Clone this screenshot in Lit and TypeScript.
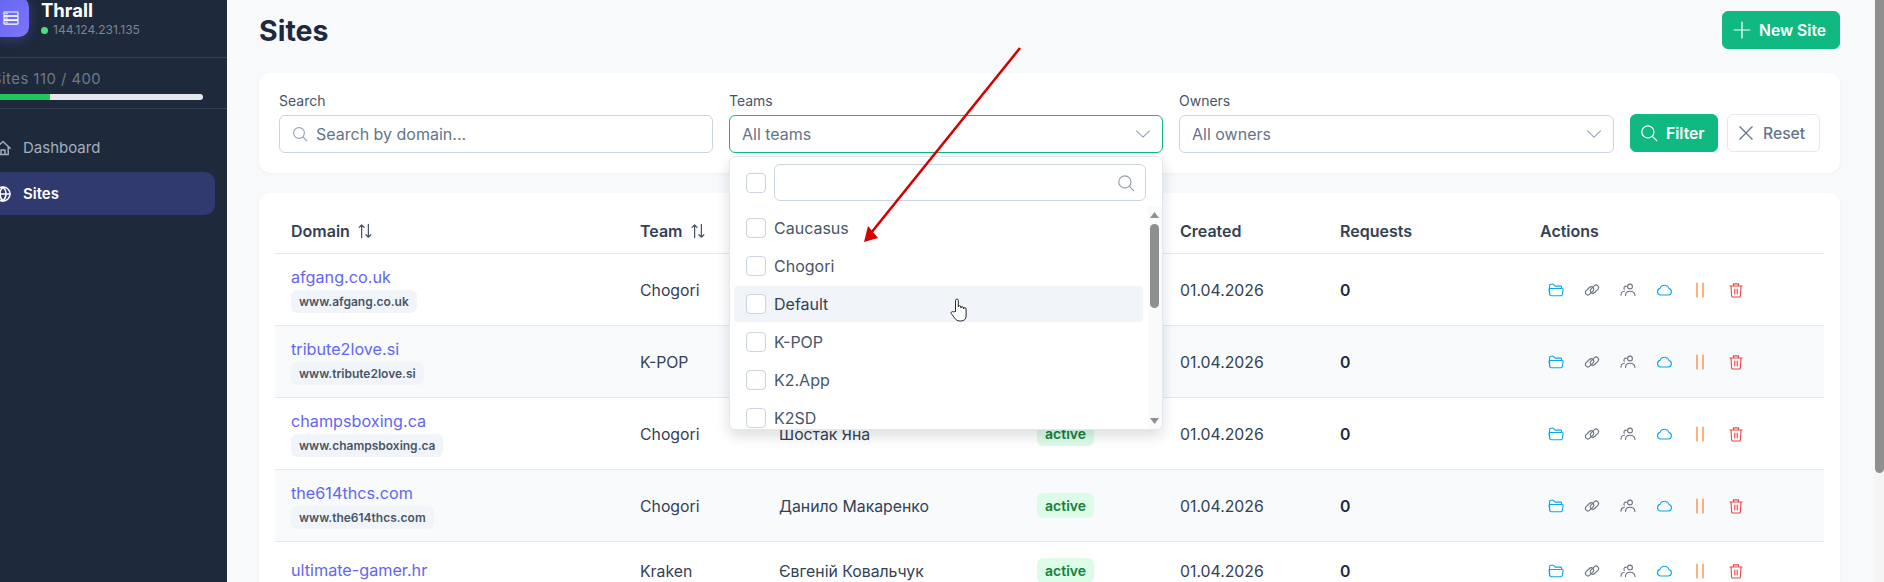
import { LitElement, html, css, svg } from "lit";
import { customElement } from "lit/decorators.js";

const ico = (body: unknown, cls = "") => html`<svg class="ico ${cls}" viewBox="0 0 16 16" fill="none" stroke="currentColor" stroke-width="1.1" stroke-linecap="round" stroke-linejoin="round">${body}</svg>`;

const searchI = svg`<circle cx="7" cy="7" r="5.4"/><path d="M11 11l3.8 3.8"/>`;
const chevron = svg`<path d="M1.5 4.8L8 11.2l6.500-6.400"/>`;
const folder = svg`<path d="M1.600 12.500V3.200a.9.9 0 0 1 .9-.9h3l1.700 1.800h5.500a.9.900 0 0 1 .9.9v1.500"/><path d="M2 6.500h12.300a.8.8 0 0 1 .8.9l-.7 5a1.500 1.500 0 0 1-1.500 1.300H3.200a1.500 1.500 0 0 1-1.500-1.300L1 7.400a.8.8 0 0 1 1-.9z"/>`;
const clip = svg`<rect x="0.800" y="6.400" width="9.500" height="5" rx="2.500" transform="rotate(-45 5.500 8.900)"/><rect x="5.700" y="4.600" width="9.500" height="5" rx="2.500" transform="rotate(-45 10.500 7.100)"/>`;
const people = svg`<circle cx="10" cy="4.500" r="2.400"/><path d="M5.500 13.500c0-2.800 2-4.300 4.500-4.300s4.800 1.500 5 4.300"/><path d="M6.500 4.200a2 2 0 0 0-2.200 3.100"/><path d="M1 13.200c0-2.300 1.300-3.600 3.400-3.900"/>`;
const cloud = svg`<path d="M4.200 13h7.800a3.300 3.300 0 0 0 .9-6.500A4.700 4.700 0 0 0 4 6.400 3.400 3.400 0 0 0 4.200 13z"/>`;
const pause = svg`<path d="M5 1v14M11 1v14"/>`;
const trash = svg`<path d="M2 4h12M5.500 4V1.900h5V4M3 4l.6 10a1 1 0 0 0 1 1h6.800a1 1 0 0 0 1-1L13 4M6.800 7v5M9.200 7v5"/>`;
const sort = svg`<path d="M5 14V2.500M2.800 4.800L5 2.500l2.200 2.300M11 2v11.500M8.800 11.300L11 13.500l2.200-2.200"/>`;
const house = svg`<path d="M.8 8.200L8 1.500l7.200 6.700M2.800 6.500V14.500h10.400V6.500M6 14.500V10h4v4.500"/>`;
const globe = svg`<circle cx="8" cy="8" r="7"/><path d="M1 8h14M8 1c-4 4-4 10 0 14M8 1c4 4 4 10 0 14"/>`;
const server = svg`<rect x="1" y="2" width="14" height="3.700" rx=".6"/><rect x="1" y="6.200" width="14" height="3.700" rx=".6"/><rect x="1" y="10.400" width="14" height="3.700" rx=".6"/><path d="M2.800 3.800h1.500M2.800 8h1.500M2.800 12.200h1.500"/>`;

const rows = [
  { d: "afgang.co.uk", w: "www.afgang.co.uk", t: "Chogori", o: "Шостак Яна" },
  { d: "tribute2love.si", w: "www.tribute2love.si", t: "K-POP", o: "Данило Макаренко" },
  { d: "champsboxing.ca", w: "www.champsboxing.ca", t: "Chogori", o: "Шостак Яна" },
  { d: "the614thcs.com", w: "www.the614thcs.com", t: "Chogori", o: "Данило Макаренко" },
  { d: "ultimate-gamer.hr", w: "", t: "Kraken", o: "Євгеній Ковальчук" },
];
const teams = ["Caucasus", "Chogori", "Default", "K-POP", "K2.App", "K2SD"];

@customElement("app-root")
export class AppRoot extends LitElement {
  static styles = css`
    :host { display: flex; position: relative; height: 100vh; overflow: hidden; background: #f8f9fb; font-family: Inter, "Noto Sans", sans-serif; color: #334155; }
    * { box-sizing: border-box; }
    .ico { width: 16px; height: 16px; display: block; flex: none; }

    aside { width: 227px; flex: none; background: #1e293b; overflow: hidden; }
    .side { width: 255px; margin-left: -28px; }
    .brand { height: 58px; padding-left: 20px; display: flex; gap: 12px; border-bottom: 1px solid #334155; }
    .logo { width: 37px; height: 40px; margin-top: -3px; padding-top: 2px; border-radius: 10px; background: linear-gradient(135deg, #6366f1, #7c75f8); box-shadow: 0 2px 12px rgba(99,102,241,.35); color: #fff; display: flex; align-items: center; justify-content: center; }
    .brand-text { display: flex; flex-direction: column; }
    .brand-name { font-size: 18.500px; line-height: 20px; font-weight: 700; color: #fff; }
    .brand-ip { display: flex; align-items: center; gap: 5px; font-size: 12px; line-height: 20px; color: #7b8694; }
    .dot { width: 7px; height: 7px; border-radius: 50%; background: #4ade80; }
    .usage { height: 51px; padding: 11px 24px 0 20px; border-bottom: 1px solid #334155; }
    .usage-text { font-size: 14.800px; line-height: 20px; letter-spacing: .5px; color: #6f7a88; }
    .bar { height: 6px; margin-top: 5px; border-radius: 3px; background: #e5e7eb; overflow: hidden; }
    .bar i { display: block; height: 100%; width: 27.5%; background: #22c55e; }
    nav { padding: 17px 12px 0; display: flex; flex-direction: column; gap: 3px; }
    nav a { height: 43px; padding: 0 11px; display: flex; align-items: center; gap: 12px; border-radius: 10px; font-size: 15px; color: #a3afbf; }
    nav a.on { background: #313a6e; color: #fff; font-weight: 600; }
    nav .ico { stroke-width: 1.500; }

    main { flex: 1; min-width: 0; padding: 11px 34px 0 32px; overflow: hidden; }
    .head { display: flex; justify-content: space-between; align-items: center; height: 38px; margin-bottom: 24px; }
    h1 { margin: 0; font-size: 28.500px; font-weight: 700; color: #1e293b; }
    .btn { height: 38px; display: inline-flex; align-items: center; gap: 8px; padding: 0 9px; border-radius: 6px; font-size: 15.700px; font-weight: 600; background: #10b981; color: #fff; border: 1px solid #10b981; }
    .btn .ico { width: 18px; height: 18px; }
    .btn.new { width: 118px; padding: 0 10px; }
    .btn.filter { width: 88px; }
    .btn.reset { width: 93px; background: #fff; color: #64748b; border-color: #e2e8f0; font-weight: 500; }
    .btns { display: flex; gap: 9px; margin-bottom: 1px; }
    .card { background: #fff; border-radius: 12px; box-shadow: 0 1px 3px rgba(15,23,42,.04); }
    .filters { height: 100px; margin-bottom: 20px; padding: 20px; display: flex; gap: 16px; align-items: flex-end; }
    .field { flex: none; width: 434px; position: relative; }
    .field.last { flex: 1; }
    label { display: block; font-size: 14px; line-height: 16px; margin-bottom: 6px; color: #475569; }
    .input { height: 38px; border: 1px solid #cbd5e1; border-radius: 6px; padding: 0 12px; display: flex; align-items: center; gap: 8px; font-size: 16px; color: #64748b; background: #fff; }
    .input .ico { color: #94a3b8; }
    .input span { flex: 1; }
    .input.sel { padding-right: 11px; }
    .input.open { border-color: #10b981; }

    .drop { position: absolute; left: 0; right: 0; top: 63px; height: 274px; z-index: 5; background: #fff; border: 1px solid #e2e8f0; border-radius: 6px; box-shadow: 0 6px 14px rgba(15,23,42,.14); overflow: hidden; }
    .drop-top { display: flex; align-items: center; gap: 8px; padding: 7px 16px 0 16px; }
    .cb { width: 20px; height: 20px; flex: none; border: 1px solid #cbd5e1; border-radius: 4px; background: #fff; }
    .drop-search { flex: 1; height: 37px; border: 1px solid #cbd5e1; border-radius: 6px; display: flex; justify-content: flex-end; align-items: center; padding-right: 10px; }
    .drop-search .ico { color: #94a3b8; width: 18px; height: 18px; }
    .list { margin: 9px 0 0 4px; width: 409px; display: flex; flex-direction: column; gap: 2px; }
    .item { height: 36px; flex: none; padding-left: 12px; display: flex; align-items: center; gap: 8px; font-size: 16px; color: #475569; border-radius: 4px; }
    .item.hover { background: #f1f5f9; color: #334155; }
    .sb { position: absolute; right: 0; top: 49px; bottom: 0; width: 14px; background: #fafafa; }
    .sb .thumb { position: absolute; left: 2px; top: 18px; width: 9px; height: 84px; border-radius: 5px; background: #8f8f8f; }
    .tri { position: absolute; left: 2px; width: 9px; height: 6px; background: #8f8f8f; }
    .tri.up { top: 6px; clip-path: polygon(50% 0, 100% 100%, 0 100%); }
    .tri.down { bottom: 5px; clip-path: polygon(0 0, 100% 0, 50% 100%); }

    .tcard { padding: 16px 16px 0; height: 460px; }
    table { width: 100%; table-layout: fixed; border-collapse: collapse; }
    th { height: 44px; padding: 0 16px; text-align: left; font-size: 16px; font-weight: 600; color: #334155; border-bottom: 1px solid #e2e8f0; }
    th .th { display: flex; align-items: center; gap: 6px; }
    th .ico { color: #475569; width: 18px; height: 18px; }
    th:nth-child(1) { width: 349px; } th:nth-child(2) { width: 139px; } th:nth-child(3) { width: 258px; }
    th:nth-child(4) { width: 143px; } th:nth-child(5) { width: 160px; } th:nth-child(6) { width: 200px; }
    td { height: 72px; padding: 2px 16px 0; font-size: 15.800px; color: #334155; border-bottom: 1px solid #e2e8f0; }
    td:first-child { padding: 0 16px 1px; }
    td:nth-child(4) { padding: 0 16px; }
    tr.alt td { background: #f8fafc; }
    tr.solo td { height: 58px; }
    .link { display: block; font-size: 16.200px; line-height: 24px; color: #6366f1; }
    .sub { display: inline-block; height: 23px; line-height: 23px; margin-top: 1px; padding: 0 8px; border-radius: 6px; background: #f1f5f9; color: #475569; font-size: 12px; font-weight: 600; }
    .active { display: inline-block; height: 25px; line-height: 25px; padding: 0 8px; border-radius: 6px; background: #dcfce7; color: #15803d; font-size: 14px; font-weight: 600; }
    .req { font-weight: 600; color: #1e293b; }
    .acts { display: flex; gap: 20px; padding-left: 8px; }
    .blue { color: #0ea5e9; } .grey { color: #6b7280; } .orange { color: #f97316; } .red { color: #ef4444; }

    .pagebar { width: 10px; flex: none; background: #f5f5f5; padding-left: 1px; }
    .pagebar i { display: block; height: 473px; border-radius: 0 0 5px 5px; background: #8f8f8f; }

    .arrow { position: absolute; left: 850px; top: 40px; width: 180px; height: 210px; z-index: 9; pointer-events: none; }
    .hand { position: absolute; left: 950px; top: 298px; width: 18px; height: 24px; z-index: 9; pointer-events: none; }
  `;

  render() {
    return html`
      <aside><div class="side">
        <div class="brand">
          <div class="logo">${ico(server)}</div>
          <div class="brand-text">
            <div class="brand-name">Thrall</div>
            <div class="brand-ip"><i class="dot"></i>144.124.231.135</div>
          </div>
        </div>
        <div class="usage">
          <div class="usage-text">Sites 110 / 400</div>
          <div class="bar"><i></i></div>
        </div>
        <nav>
          <a>${ico(house)}Dashboard</a>
          <a class="on">${ico(globe)}Sites</a>
        </nav>
      </div></aside>

      <main>
        <div class="head">
          <h1>Sites</h1>
          <div class="btn new">${ico(svg`<path d="M8 1v14M1 8h14"/>`)}New Site</div>
        </div>

        <div class="card filters">
          <div class="field">
            <label>Search</label>
            <div class="input">${ico(searchI)}<span>Search by domain...</span></div>
          </div>
          <div class="field">
            <label>Teams</label>
            <div class="input sel open"><span>All teams</span>${ico(chevron)}</div>
            <div class="drop">
              <div class="drop-top"><i class="cb"></i><div class="drop-search">${ico(searchI)}</div></div>
              <div class="list">
                ${teams.map((t) => html`<div class="item ${t === "Default" ? "hover" : ""}"><i class="cb"></i>${t}</div>`)}
              </div>
              <div class="sb"><i class="tri up"></i><i class="thumb"></i><i class="tri down"></i></div>
            </div>
          </div>
          <div class="field last">
            <label>Owners</label>
            <div class="input sel"><span>All owners</span>${ico(chevron)}</div>
          </div>
          <div class="btns">
            <div class="btn filter">${ico(searchI)}Filter</div>
            <div class="btn reset">${ico(svg`<path d="M2.500 2.500l11 11M13.500 2.500l-11 11"/>`)}Reset</div>
          </div>
        </div>

        <div class="card tcard">
          <table>
            <thead><tr>
              <th><div class="th">Domain ${ico(sort)}</div></th>
              <th><div class="th">Team ${ico(sort)}</div></th>
              <th>Owner</th>
              <th>Status</th>
              <th>Created</th>
              <th>Requests</th>
              <th>Actions</th>
            </tr></thead>
            <tbody>
              ${rows.map((r, i) => html`
                <tr class="${i % 2 ? "alt" : ""} ${r.w ? "" : "solo"}">
                  <td><a class="link">${r.d}</a>${r.w ? html`<span class="sub">${r.w}</span>` : ""}</td>
                  <td>${r.t}</td>
                  <td>${r.o}</td>
                  <td><span class="active">active</span></td>
                  <td>01.04.2026</td>
                  <td class="req">0</td>
                  <td><div class="acts">
                    ${ico(folder, "blue")}${ico(clip, "grey")}${ico(people, "grey")}${ico(cloud, "blue")}${ico(pause, "orange")}${ico(trash, "red")}
                  </div></td>
                </tr>`)}
            </tbody>
          </table>
        </div>
      </main>

      <div class="pagebar"><i></i></div>

      <svg class="arrow" viewBox="850 40 180 210">
        <path d="M1020 48L871 233" stroke="#d40000" stroke-width="2.600" fill="none"/>
        <path d="M864 242L868 226L878 238Z" fill="#d40000"/>
      </svg>
      <svg class="hand" viewBox="0 0 18 24"><path d="M5.500 13.500V2.500a1.400 1.400 0 0 1 2.800 0V9a1.300 1.300 0 0 1 2.600 0v1a1.300 1.300 0 0 1 2.600 0v1a1.300 1.300 0 0 1 2.600 0v7c0 3-2 5-5 5h-1c-2.500 0-4-1-5.500-3L1.300 15.500c-.8-1.200.8-2.600 2-1.600z" fill="#fff" stroke="#1f2937" stroke-width="1"/></svg>
    `;
  }
}
